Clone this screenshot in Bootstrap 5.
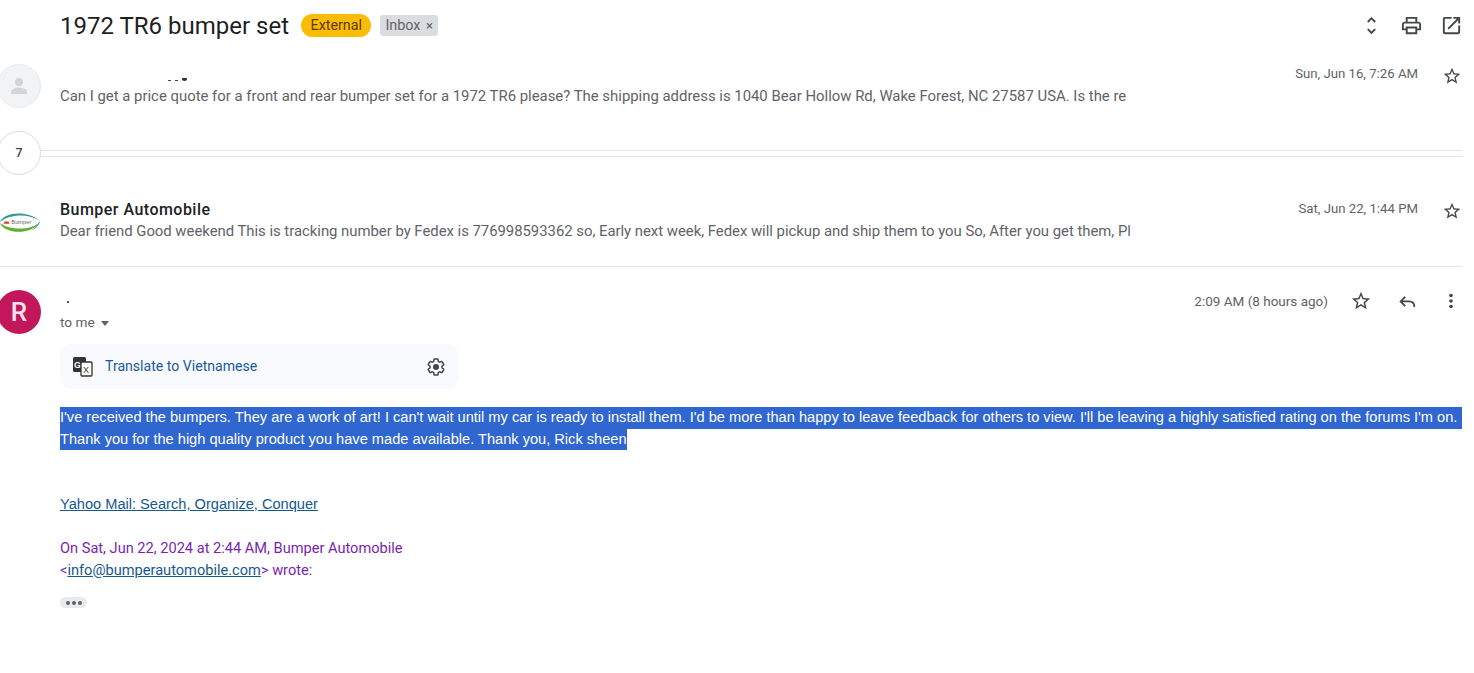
<!DOCTYPE html>
<html lang="en">
<head>
  <meta charset="UTF-8">
  <title>1972 TR6 bumper set</title>
  <link rel="stylesheet" href="https://cdn.jsdelivr.net/npm/bootstrap@5.3.0/dist/css/bootstrap.min.css">
  <style>
    html, body { height: 100%; overflow: hidden; }
    body {
      background: #fff;
      color: #222;
      font-family: Roboto, "Liberation Sans", sans-serif;
      font-size: 14.6px;
    }
    .mail-page { padding-right: 12px; }
    /* subject row */
    .subject-bar { height: 64px; padding-left: 60px; padding-top: 8px; margin-right: -1px; }
    .subject-text { font-size: 24px; line-height: 36px; color: #1f1f1f; margin: 0; font-weight: 400; }
    .tag-external {
      background: #fbbc04; color: #5c3a00; font-size: 14.3px; line-height: 23px;
      border-radius: 12px; padding: 0 9.5px; margin: 6px 0 0 12px;
    }
    .tag-inbox {
      background: #dadce0; color: #5f6368; font-size: 14.3px; line-height: 20px;
      border-radius: 3px; padding: 0 5px; margin: 7px 0 0 9px;
    }
    .tag-x { font-size: 13px; margin-left: 2px; }
    .top-icons { gap: 17px; margin-left: auto; margin-top: 6px; }
    .ico { width: 23px; height: 23px; fill: #444746; flex: none; }
    .ico-star { width: 20px; height: 20px; margin-top: 2px; }
    .ico-sm { width: 22px; height: 22px; }
    .ico-star-open { margin-right: 2px; }
    /* avatars */
    .avatar-slot { width: 60px; flex: none; }
    .avatar {
      width: 44px; height: 44px; border-radius: 50%; margin-left: -3px;
      display: flex; align-items: center; justify-content: center;
    }
    .avatar-blank { background: #f1f3f4; border: 1px solid #e8eaed; }
    .avatar-r { background: #c2185b; color: #fbe4ee; font-size: 26px; font-weight: 500; }
    .avatar-logo { background: #fff; }
    /* message rows */
    .msg-row { display: flex; position: relative; }
    .msg-one { height: 67px; }
    .msg-two { height: 110px; padding-top: 42px; border-bottom: 1px solid #e3e5e8; }
    .msg-open { padding-top: 23px; }
    .msg-main { flex: 1; min-width: 0; }
    .sender-line { height: 21px; line-height: 21px; font-weight: 500; font-size: 16px; letter-spacing: .47px; color: #202124; }
    /* leftovers of the blanked out sender names */
    .name-marks { padding-left: 108px; display: flex; align-items: flex-end; gap: 4px; height: 17px; margin-bottom: 4px; }
    .name-tick { display: block; width: 3px; height: 1px; background: #444; }
    .name-tail { display: block; width: 5px; height: 3px; background: #333; border-radius: 0 0 3px 3px; }
    .name-speck { display: block; width: 2px; height: 2px; background: #555; margin: 0 0 9px 7px; }
    .snippet { color: #5f6368; line-height: 22px; white-space: nowrap; font-size: 14.9px; }
    .snippet-tight { letter-spacing: -.025px; }
    .msg-date { color: #5f6368; font-size: 13.2px; white-space: nowrap; }
    .msg-date-open { font-size: 13.5px; }
    .msg-side { gap: 24px; }
    .msg-side-open { gap: 22px; }
    /* collapsed count */
    .collapsed-row { height: 7px; margin-top: 19px; border-top: 1px solid #e3e5e8; border-bottom: 1px solid #e3e5e8; position: relative; }
    .count-circle {
      position: absolute; left: -3px; top: -20px; width: 44px; height: 44px; border-radius: 50%;
      background: #fff; border: 1px solid #dadce0; font-size: 12.5px; font-weight: 500; color: #444;
      display: flex; align-items: center; justify-content: center;
    }
    .to-line { color: #5f6368; font-size: 13.7px; line-height: 20px; }
    .caret-down { display: inline-block; border: 4.5px solid transparent; border-top: 5px solid #5f6368; border-bottom: 0; margin-left: 6px; vertical-align: 1px; }
    /* translate */
    .translate-box {
      width: 399px; height: 45px; background: #f8fafd; border-radius: 12px;
      margin-top: 12px; padding: 0 13px 0 12px; font-size: 14.1px;
    }
    .translate-box span { margin-left: 11px; color: #1a5a9a; }
    .ico-gear { width: 20px; height: 20px; }
    /* body */
    .body-text { font-size: 14.62px; line-height: 21.5px; margin-top: 18px; font-family: "Liberation Sans", Roboto, sans-serif; }
    .sel-line { background: #2f66cf; color: #fff; white-space: nowrap; }
    .yahoo-link { display: block; margin-top: 43px; color: #15598f; line-height: 22px; font-family: "Liberation Sans", Roboto, sans-serif; font-size: 14.62px; }
    .quote-head { color: #7a1fb0; line-height: 22px; margin-top: 22px; }
    .quote-head a { color: #15598f; }
    .dots-btn {
      width: 27px; height: 11px; background: #e8eaed; border-radius: 6px; margin-top: 16px;
      gap: 2px;
    }
    .dots-btn i { width: 4px; height: 4px; border-radius: 50%; background: #5f6368; display: block; }
  </style>
</head>
<body>
<div class="mail-page">

  <div class="subject-bar d-flex align-items-start">
    <h1 class="subject-text">1972 TR6 bumper set</h1>
    <span class="tag-external">External</span>
    <span class="tag-inbox">Inbox <span class="tag-x">×</span></span>
    <div class="top-icons d-flex">
      <svg class="ico" viewBox="0 0 24 24"><path d="M12 5.83 15.17 9l1.41-1.41L12 3 7.41 7.59 8.83 9 12 5.83zm0 12.34L8.83 15l-1.41 1.41L12 21l4.59-4.59L15.17 15 12 18.17z"/></svg>
      <svg class="ico" viewBox="0 0 24 24"><path d="M19 8h-1V3H6v5H5c-1.66 0-3 1.34-3 3v6h4v4h12v-4h4v-6c0-1.66-1.34-3-3-3zM8 5h8v3H8V5zm8 12v2H8v-4h8v2zm2-2v-2H6v2H4v-4c0-.55.45-1 1-1h14c.55 0 1 .45 1 1v4h-2z"/></svg>
      <svg class="ico" viewBox="0 0 24 24"><path d="M19 19H5V5h7V3H5a2 2 0 0 0-2 2v14a2 2 0 0 0 2 2h14c1.1 0 2-.9 2-2v-7h-2v7zM14 3v2h3.59l-9.83 9.83 1.41 1.41L19 6.41V10h2V3h-7z"/></svg>
    </div>
  </div>

  <div class="msg-row msg-one">
    <div class="avatar-slot">
      <div class="avatar avatar-blank">
        <svg width="24" height="24" viewBox="0 0 24 24" fill="#d2d4d7"><circle cx="12" cy="8" r="4"/><path d="M4 20v-2c0-3 5-4.5 8-4.5s8 1.5 8 4.5v2z"/></svg>
      </div>
    </div>
    <div class="msg-main">
      <div class="name-marks"><i class="name-tick"></i><i class="name-tick"></i><i class="name-tail"></i></div>
      <div class="snippet">Can I get a price quote for a front and rear bumper set for a 1972 TR6 please? The shipping address is 1040 Bear Hollow Rd, Wake Forest, NC 27587 USA. Is the re</div>
    </div>
    <div class="msg-side d-flex align-items-start">
      <span class="msg-date">Sun, Jun 16, 7:26 AM</span>
      <svg class="ico ico-star" viewBox="0 0 24 24"><path d="M22 9.24l-7.19-.62L12 2 9.19 8.63 2 9.24l5.46 4.73L5.82 21 12 17.27 18.18 21l-1.63-7.03L22 9.24zM12 15.4l-3.76 2.27 1-4.28-3.32-2.88 4.38-.38L12 6.1l1.71 4.04 4.38.38-3.32 2.88 1 4.28L12 15.4z"/></svg>
    </div>
  </div>

  <div class="collapsed-row"><div class="count-circle">7</div></div>

  <div class="msg-row msg-two">
    <div class="avatar-slot">
      <div class="avatar avatar-logo">
        <svg width="46" height="44" viewBox="0 0 46 44">
          <path d="M3 23C6 14 30 9 45 22 34 14 14 14 3 23z" fill="#2f9a8a"/>
          <path d="M3 24C8 36 36 37 45 23 38 31 14 33 3 24z" fill="#5fb030"/>
          <path d="M45 22C44 27 40 30 36 32 40 29 42 26 45 22z" fill="#1f7fb0"/>
          <text x="15" y="25" font-size="6" fill="#666" font-family="Liberation Sans">Bumper</text>
          <path d="M7 25l1-2.5h4l1 2.5z" fill="#d33"/>
        </svg>
      </div>
    </div>
    <div class="msg-main">
      <div class="sender-line">Bumper Automobile</div>
      <div class="snippet snippet-tight">Dear friend Good weekend This is tracking number by Fedex is 776998593362 so, Early next week, Fedex will pickup and ship them to you So, After you get them, Pl</div>
    </div>
    <div class="msg-side d-flex align-items-start">
      <span class="msg-date">Sat, Jun 22, 1:44 PM</span>
      <svg class="ico ico-star" viewBox="0 0 24 24"><path d="M22 9.24l-7.19-.62L12 2 9.19 8.63 2 9.24l5.46 4.73L5.82 21 12 17.27 18.18 21l-1.63-7.03L22 9.24zM12 15.4l-3.76 2.27 1-4.28-3.32-2.88 4.38-.38L12 6.1l1.71 4.04 4.38.38-3.32 2.88 1 4.28L12 15.4z"/></svg>
    </div>
  </div>

  <div class="msg-row msg-open">
    <div class="avatar-slot"><div class="avatar avatar-r">R</div></div>
    <div class="msg-main">
      <div class="d-flex align-items-start">
        <i class="name-speck mt-auto"></i>
        <div class="msg-side msg-side-open d-flex align-items-center ms-auto">
          <span class="msg-date msg-date-open">2:09 AM (8 hours ago)</span>
          <svg class="ico ico-sm ico-star-open" viewBox="0 0 24 24"><path d="M22 9.24l-7.19-.62L12 2 9.19 8.63 2 9.24l5.46 4.73L5.82 21 12 17.27 18.18 21l-1.63-7.03L22 9.24zM12 15.4l-3.76 2.27 1-4.28-3.32-2.88 4.38-.38L12 6.1l1.71 4.04 4.38.38-3.32 2.88 1 4.28L12 15.4z"/></svg>
          <svg class="ico ico-sm" viewBox="0 0 24 24"><path d="M10 7.5 5 12.5 10 17.5M5 12.5h9c4 0 6 2.5 6 6" fill="none" stroke="#444746" stroke-width="1.9"/></svg>
          <svg class="ico ico-sm" viewBox="0 0 24 24"><circle cx="12" cy="6" r="2"/><circle cx="12" cy="12" r="2"/><circle cx="12" cy="18" r="2"/></svg>
        </div>
      </div>
      <div class="to-line">to me<span class="caret-down"></span></div>
      <div class="translate-box d-flex align-items-center">
        <svg width="22" height="22" viewBox="0 0 22 22">
          <rect x="1" y="1" width="13" height="15" rx="1.5" fill="#333"/>
          <text x="2" y="11.5" font-size="9" font-weight="700" fill="#fff" font-family="Liberation Sans">G</text>
          <rect x="9" y="6" width="11" height="14" rx="1" fill="#fff" stroke="#333" stroke-width="1.3"/>
          <text x="11" y="17" font-size="9" fill="#333" font-family="Liberation Sans">X</text>
        </svg>
        <span>Translate to Vietnamese</span>
        <svg class="ico ico-gear ms-auto" viewBox="0 0 24 24"><path d="M19.14 12.94c.04-.3.06-.61.06-.94 0-.32-.02-.64-.07-.94l2.03-1.58c.18-.14.23-.41.12-.61l-1.92-3.32c-.12-.22-.37-.29-.59-.22l-2.39.96c-.5-.38-1.03-.7-1.62-.94l-.36-2.54c-.04-.24-.24-.41-.48-.41h-3.84c-.24 0-.43.17-.47.41l-.36 2.54c-.59.24-1.13.57-1.62.94l-2.39-.96c-.22-.08-.47 0-.59.22L2.74 8.87c-.12.21-.08.47.12.61l2.03 1.58c-.05.3-.09.63-.09.94s.02.64.07.94l-2.03 1.58c-.18.14-.23.41-.12.61l1.92 3.32c.12.22.37.29.59.22l2.39-.96c.5.38 1.03.7 1.62.94l.36 2.54c.05.24.24.41.48.41h3.84c.24 0 .44-.17.47-.41l.36-2.54c.59-.24 1.13-.56 1.62-.94l2.39.96c.22.08.47 0 .59-.22l1.92-3.32c.12-.22.07-.47-.12-.61l-2.01-1.58z" fill="none" stroke="#444746" stroke-width="1.8"/><circle cx="12" cy="12" r="3.6"/></svg>
      </div>
      <div class="body-text">
        <div class="sel-line">I've received the bumpers. They are a work of art! I can't wait until my car is ready to install them. I'd be more than happy to leave feedback for others to view. I'll be leaving a highly satisfied rating on the forums I'm on.</div>
        <div><span class="sel-line d-inline-block">Thank you for the high quality product you have made available. Thank you, Rick sheen</span></div>
      </div>
      <a class="yahoo-link" href="#">Yahoo Mail: Search, Organize, Conquer</a>
      <div class="quote-head">On Sat, Jun 22, 2024 at 2:44 AM, Bumper Automobile<br>&lt;<a href="#">info@bumperautomobile.com</a>&gt; wrote:</div>
      <div class="dots-btn d-flex align-items-center justify-content-center"><i></i><i></i><i></i></div>
    </div>
  </div>

</div>
</body>
</html>
